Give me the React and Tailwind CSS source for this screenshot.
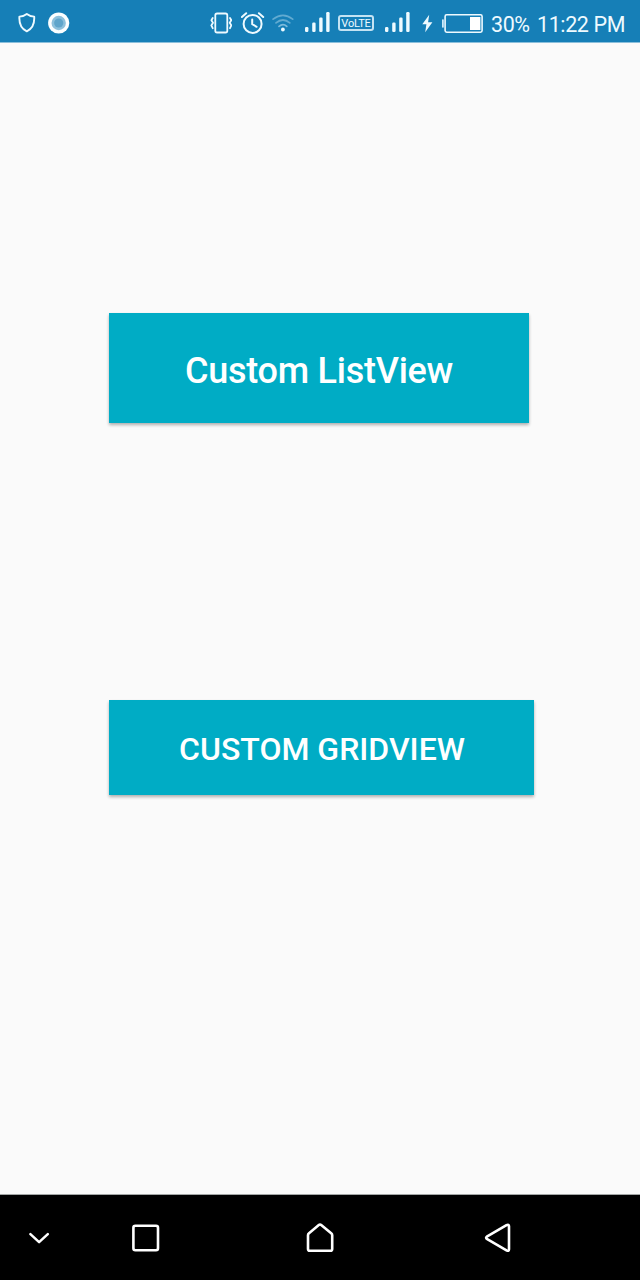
function Signal({ className }) {
  return (
    <svg className={className} width="25" height="42" viewBox="0 0 25 42" fill="#eefaff">
      <rect x="0" y="27" width="3.4" height="5" rx="1.2" />
      <rect x="7.2" y="22.5" width="3.4" height="9.5" rx="1.2" />
      <rect x="14.2" y="17.5" width="3.4" height="14.5" rx="1.2" />
      <rect x="21.2" y="12" width="3.4" height="20" rx="1.2" />
    </svg>
  );
}

function StatusBar() {
  return (
    <header className="flex h-[43px] shrink-0 items-center border-b border-[#8bbfdb] bg-[#167fb7] text-[#eefaff]">
      <svg className="ml-[18px]" width="18" height="42" viewBox="0 0 18 42" fill="none" stroke="#eefaff" strokeWidth="1.9" strokeLinejoin="round">
        <path d="M8.8 14 Q5.5 16.6 1.4 16.6 C1 23 2.4 28.6 8.8 31.3 C15.2 28.6 16.6 23 16.2 16.6 Q12.1 16.6 8.8 14Z" />
      </svg>
      <svg className="ml-3" width="22" height="42" viewBox="0 0 22 42">
        <circle cx="10.7" cy="23" r="10.6" fill="#fbfeff" />
        <circle cx="10.7" cy="23" r="7.2" fill="#8cc0dc" />
        <circle cx="10.7" cy="23" r="4.6" fill="#5fa5cb" />
      </svg>
      <svg className="ml-[140px]" width="22" height="42" viewBox="0 0 22 42" fill="none" stroke="#eefaff" strokeWidth="1.8" strokeLinecap="round" strokeLinejoin="round">
        <rect x="5.3" y="13.5" width="12" height="19" rx="1.8" />
        <path d="M2.7 18 L1.4 20.2 L3 22.7 L1.3 25.4 L2.7 28.2 M20 18 L21.3 20.2 L19.7 22.7 L21.3 25.4 L20 28.2" />
      </svg>
      <svg className="ml-[9px]" width="24" height="42" viewBox="0 0 24 42" fill="none" stroke="#eefaff" strokeWidth="2" strokeLinecap="round" strokeLinejoin="round">
        <circle cx="11.6" cy="23.9" r="9" />
        <path d="M11.2 19.4 V24.2 L15.6 26.8 M0.9 17 L5.2 13.2 M22.2 17 L17.9 13.2" />
      </svg>
      <svg className="ml-[7px]" width="22" height="42" viewBox="0 0 22 42" fill="none" strokeWidth="1.7" strokeLinecap="round">
        <path d="M1.1 19.2 Q11 11.4 20.7 19.2" stroke="#62abd1" />
        <path d="M4 22.9 Q11 17.1 17.8 22.9" stroke="#62abd1" />
        <path d="M7 26.4 Q11 22.9 14.8 26.4" stroke="#7dbbdc" />
        <circle cx="10.9" cy="29.5" r="1.9" fill="#eefaff" />
      </svg>
      <Signal className="ml-[11px]" />
      <div className="mt-[4px] ml-2 flex h-4 w-9 items-center justify-center rounded-[3px] border-2 border-[#c4e3f3] font-['Roboto',sans-serif] text-[11px] leading-none tracking-[-0.2px]">
        VoLTE
      </div>
      <Signal className="ml-[11px]" />
      <svg className="ml-3" width="11" height="42" viewBox="0 0 11 42" fill="#eefaff">
        <path d="M7.2 14.8 L0.3 24.2 H4.4 L3.2 32.3 L10.4 22.2 H6.1Z" />
      </svg>
      <svg className="ml-[9px]" width="41" height="42" viewBox="0 0 41 42">
        <rect x="0" y="19.3" width="1.8" height="8.4" rx="0.8" fill="#cceafa" />
        <rect x="3.1" y="14.8" width="37" height="17.4" rx="1.6" fill="none" stroke="#eefaff" strokeWidth="1.6" />
        <rect x="28" y="17" width="10.4" height="13" fill="#ffffff" />
      </svg>
      <span className="mt-[7px] ml-2 w-[39px] font-['Roboto',sans-serif] text-[21.5px] leading-none tracking-[-0.4px] whitespace-nowrap">30%</span>
      <span className="mt-[8px] ml-[7px] font-['Roboto',sans-serif] text-[21.5px] leading-none tracking-[-0.4px] whitespace-nowrap">11:22 PM</span>
    </header>
  );
}

function NavigationBar() {
  return (
    <nav className="flex h-[86px] shrink-0 items-center border-t border-[#a3a6a5] bg-black">
      <svg className="ml-7" width="22" height="86" viewBox="0 0 22 86" fill="none" stroke="#fff" strokeWidth="2.5" strokeLinecap="round" strokeLinejoin="round">
        <path d="M2.4 39.2 L11.1 47.2 L19.8 39.2" />
      </svg>
      <svg className="ml-[82px]" width="28" height="86" viewBox="0 0 28 86" fill="none" stroke="#fff" strokeWidth="2.6">
        <rect x="1.4" y="30.7" width="24.6" height="24.6" rx="2" />
      </svg>
      <svg className="ml-[146px]" width="28" height="86" viewBox="0 0 28 86" fill="none" stroke="#fff" strokeWidth="2.6" strokeLinejoin="round">
        <path d="M12.8 30.1 Q14 29.1 15.2 30.1 L25.2 38.2 Q26.2 39 26.2 40.3 V53.9 Q26.2 55.7 24.4 55.7 H3.8 Q2 55.7 2 53.9 V40.3 Q2 39 3 38.2Z" />
      </svg>
      <svg className="ml-[150px]" width="28" height="86" viewBox="0 0 28 86" fill="none" stroke="#fff" strokeWidth="2.6" strokeLinejoin="round">
        <path d="M22.5 30.1 Q25 28.9 25 31.3 V54.3 Q25 56.6 22.5 55.3 L2.8 43.9 Q1.4 42.8 2.8 41.7Z" />
      </svg>
    </nav>
  );
}

export default function App() {
  return (
    <div className="flex h-[1280px] w-[640px] flex-col overflow-hidden bg-[#fafafa] font-['Roboto',sans-serif]">
      <StatusBar />
      <main className="flex flex-1 flex-col items-start pt-[270px] pl-[109px]">
        <button className="flex h-[110px] w-[420px] items-center justify-center bg-[#00acc5] pt-[5px] text-[36px] leading-none font-medium tracking-[-0.25px] whitespace-nowrap text-white shadow-[0_2px_3px_rgba(0,0,0,0.3)]">
          Custom ListView
        </button>
        <button className="mt-[277px] flex h-[95px] w-[425px] items-center justify-center bg-[#00acc5] pt-[2px] pl-px text-[32px] leading-none font-medium whitespace-nowrap text-white shadow-[0_2px_3px_rgba(0,0,0,0.3)]">
          CUSTOM GRIDVIEW
        </button>
      </main>
      <NavigationBar />
    </div>
  );
}
